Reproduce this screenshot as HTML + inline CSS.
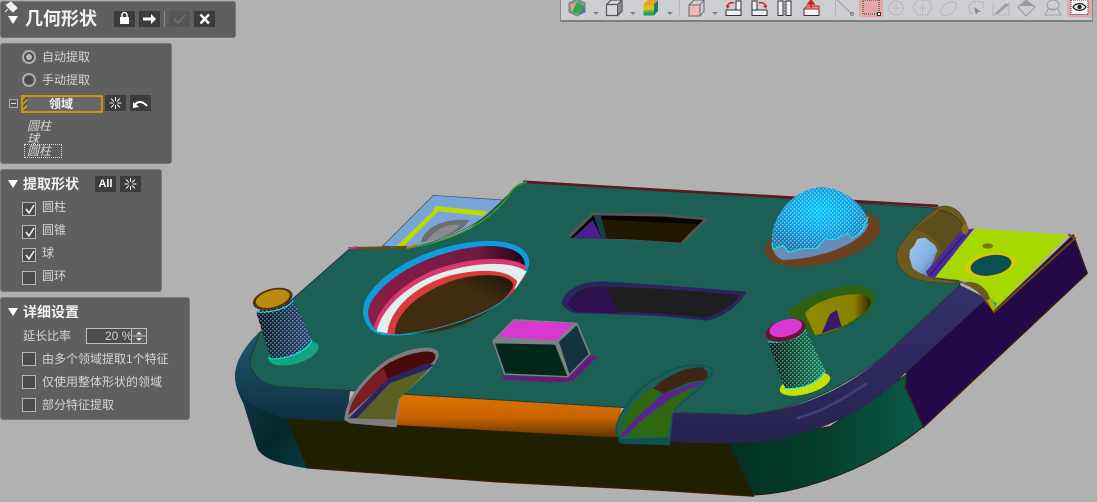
<!DOCTYPE html>
<html><head><meta charset="utf-8"><style>
html,body{margin:0;padding:0;background:#b1b1b1}
#r{position:relative;width:1097px;height:502px;overflow:hidden;background:#b1b1b1;font-family:"Liberation Sans","Noto Sans CJK SC",sans-serif;color:#d4d4d4;font-size:12px}
#r *{box-sizing:border-box}
.p{position:absolute;left:0;background:#5f5f5f;border:1px solid #777;border-radius:3px}
.t{position:absolute;white-space:nowrap;line-height:14px}
.b{font-weight:bold;color:#f2f2f2}
.btn{position:absolute;width:21px;height:16px;background:#3c3c3c;color:#fff;text-align:center;font-size:11px;line-height:16px;font-weight:bold}
.cb{position:absolute;left:22px;width:14px;height:14px;border:1px solid #b5b5b5;background:#4b4b4b}
.cb svg{position:absolute;left:1px;top:1px}
.tri{position:absolute;width:0;height:0;border-left:5px solid transparent;border-right:5px solid transparent;border-top:8px solid #fff}
.rd{position:absolute;left:22px;width:14px;height:14px;border:2px solid #b0b0b0;border-radius:50%;background:#4b4b4b}
svg{position:absolute;left:0;top:0;overflow:visible}
</style></head><body><div id="r">

<svg width="1097" height="502" viewBox="0 0 1097 502">
<defs>
<pattern id="d" width="12" height="12" patternUnits="userSpaceOnUse"><rect x="1" y="1" width="3" height="3" fill="#e8f8ff"/><rect x="7" y="7" width="3" height="3" fill="#e8f8ff"/></pattern>
<linearGradient id="og" x1="0" y1="0" x2="0" y2="1"><stop offset="0" stop-color="#e07200"/><stop offset=".55" stop-color="#c86400"/><stop offset="1" stop-color="#5f3300"/></linearGradient>
<linearGradient id="rim" x1="0" y1="0" x2="0" y2="1"><stop offset="0" stop-color="#1f5a70"/><stop offset="1" stop-color="#0e2f40"/></linearGradient>
<linearGradient id="corner" x1="0" y1="0" x2="1" y2="1"><stop offset="0" stop-color="#123c4a"/><stop offset=".6" stop-color="#04262c"/><stop offset="1" stop-color="#063a40"/></linearGradient>
<linearGradient id="wine" x1="0" y1="0" x2="1" y2="0"><stop offset="0" stop-color="#8a1d48"/><stop offset=".7" stop-color="#701a40"/><stop offset="1" stop-color="#200515"/></linearGradient>
<linearGradient id="brn" x1="0" y1="1" x2="1" y2="0"><stop offset="0" stop-color="#402e10"/><stop offset=".7" stop-color="#402c10"/><stop offset="1" stop-color="#1c1408"/></linearGradient>
<linearGradient id="cylL" x1="0" y1="0" x2="1" y2="0"><stop offset="0" stop-color="#04121e"/><stop offset="1" stop-color="#2a4c7a"/></linearGradient>
<linearGradient id="cylR" x1="0" y1="0" x2="1" y2="0"><stop offset="0" stop-color="#021a12"/><stop offset="1" stop-color="#148a5c"/></linearGradient>
<radialGradient id="sph" cx=".5" cy=".38" r=".6"><stop offset="0" stop-color="#00c8ff"/><stop offset=".6" stop-color="#0ea0e0"/><stop offset="1" stop-color="#1a7cb0"/></radialGradient>
<linearGradient id="gr" x1="0" y1="0" x2="1" y2="0"><stop offset="0" stop-color="#01301f"/><stop offset=".5" stop-color="#053f2c"/><stop offset="1" stop-color="#0a5a48"/></linearGradient>
<linearGradient id="yh" x1="0" y1="0" x2="1" y2="0"><stop offset="0" stop-color="#908a00"/><stop offset=".75" stop-color="#8a8000"/><stop offset="1" stop-color="#2c2800"/></linearGradient>
<linearGradient id="rimB" x1="0" y1="0" x2="0" y2="1"><stop offset="0" stop-color="#35316a"/><stop offset="1" stop-color="#26224f"/></linearGradient>
<linearGradient id="bl" x1="0" y1="0" x2="1" y2="1"><stop offset="0" stop-color="#a8ccf4"/><stop offset=".6" stop-color="#82aede"/><stop offset="1" stop-color="#3c6a90"/></linearGradient>
</defs>
<g transform="translate(230 170) scale(.33333)">
<!-- back plate -->
<path d="M458,228 L610,76 L822,90 C780,140 680,205 530,235Z" fill="#79a4d8" stroke="#3e4a50" stroke-width="2"/>
<path d="M500,228 L608,125 L618,108 L772,124 L762,138 L625,124 L522,228Z" fill="#bcd900"/>
<path d="M572,218 C585,170 640,145 718,150 C700,185 640,205 572,218Z" fill="#6e6e6e"/>
<path d="M590,215 C610,180 650,160 690,165 C670,190 630,205 590,215Z" fill="#8b8b8b"/>
<!-- lower side: olive -->
<path d="M165,745 L230,893 L800,935 L1290,960 L1570,978 L1560,800 L1495,820 L1320,810 L500,765 L350,755Z" fill="#1f2000" stroke="#3a1a05" stroke-width="5"/>
<!-- corner side -->
<path d="M15,620 C15,650 30,680 40,700 L80,830 C90,860 130,880 232,895 L168,745Z" fill="url(#corner)"/>
<!-- blue rim left -->
<path d="M15,620 C15,570 50,520 100,475 L140,600 L360,662 L350,755 L165,745 C80,720 15,680 15,620Z" fill="url(#rim)"/>
<path d="M88,490 L190,385 L355,238 L375,238 L200,420Z" fill="#143f50"/>
<!-- orange -->
<path d="M510,672 L1175,712 L1160,802 L500,765 C498,720 505,690 510,672Z" fill="url(#og)"/>
<!-- right lower green and purple -->
<path d="M1495,818 L1570,975 C1730,970 1950,880 2080,770 L2025,650 L2050,600 L1800,770Z" fill="url(#gr)" stroke="#2a1a08" stroke-width="3"/>
<path d="M2027,650 L2030,605 L2265,385 L2290,425 L2530,195 L2572,310 L2080,772Z" fill="#220a48" stroke="#3a2408" stroke-width="4"/>
<!-- blue rim right -->
<path d="M1325,728 L1550,735 C1680,720 1820,680 1960,560 L2190,345 L2270,385 L2030,605 C1960,680 1840,760 1700,795 C1600,820 1500,825 1315,815Z" fill="url(#rimB)"/>
<path d="M1700,745 C1780,725 1850,680 1910,640" stroke="#4c4a80" stroke-width="8" fill="none" opacity=".7"/>
<!-- top surface -->
<path d="M60,570 C60,610 90,640 140,650 L360,662 L510,672 L1175,712 L1325,726 L1550,735 C1680,720 1820,670 1960,560 L2190,345 L2130,115 L1290,60 L885,35 C840,60 800,120 720,175 C660,215 600,225 530,235 L355,240 L190,385 L88,490Z" fill="#1c5f55" stroke="#1d3b3a" stroke-width="3"/>
<!-- top edges -->
<path d="M880,35 L1290,60 L2125,108" fill="none" stroke="#5a1a20" stroke-width="8"/>
<path d="M530,234 C650,220 760,170 830,85 C845,60 860,42 890,36" fill="none" stroke="#2b9a32" stroke-width="5"/>
<path d="M355,236 L530,232" stroke="#5a5020" stroke-width="9"/>
<path d="M355,236 L382,230" stroke="#d030c0" stroke-width="5"/>
<path d="M530,234 L562,224" stroke="#d07010" stroke-width="6"/>
<!-- big hole -->
<path d="M440,490 C400,470 385,420 415,375 C470,290 620,220 760,213 C850,208 905,240 897,285 C885,330 850,370 810,400 C740,450 600,497 490,497 C470,497 450,495 440,490Z" fill="#0f9bdc"/>
<path d="M447,484 C410,460 405,420 430,385 C485,305 630,235 770,228 C840,226 890,250 884,290 C875,325 850,365 805,397 C735,445 600,490 495,492Z" fill="url(#wine)"/>
<path d="M432,470 C450,400 540,315 660,285 C730,265 840,255 888,288 L884,320 L850,365 C760,440 600,490 490,493 L445,484Z" fill="#d83a70"/>
<path d="M440,484 C455,410 550,325 670,298 C740,280 840,270 890,305 L860,352 C770,440 600,490 490,493Z" fill="#e2eeec"/>
<path d="M472,490 C480,410 570,335 680,312 C750,298 830,295 862,335 L850,365 C770,440 600,490 490,493Z" fill="#d83a3e"/>
<path d="M495,494 C490,440 560,365 680,328 C750,310 840,308 850,345 C835,395 720,475 600,488Z" fill="url(#brn)"/>
<path d="M490,495 C600,490 740,445 812,398" fill="none" stroke="#0f9bdc" stroke-width="3"/>
<!-- slot 1 -->
<path d="M1008,204 L1085,128 L1290,130 L1436,145 L1360,220 L1230,212Z" fill="#555"/>
<path d="M1020,204 L1090,136 L1300,140 L1420,150 L1350,216 L1230,208Z" fill="#050505"/>
<path d="M1110,148 L1300,158 L1405,162 L1352,218 L1230,210 L1125,204Z" fill="#221700"/>
<path d="M1030,204 L1088,150 L1115,205Z" fill="#4b1f8c"/>
<path d="M1090,135 L1112,135 L1130,205 L1115,205Z" fill="#173e4c"/>
<!-- slot 2 -->
<path d="M995,397 C1010,350 1070,330 1130,335 L1290,345 L1550,365 C1530,400 1490,440 1430,452 L1290,438 L1130,432 L1040,430 C1015,425 998,412 995,397Z" fill="#2a2560"/>
<path d="M1012,402 C1030,360 1080,345 1130,350 L1290,356 L1530,375 C1510,405 1470,435 1420,442 L1290,430 L1150,425 L1040,425Z" fill="#1e1e1e"/>
<path d="M1012,405 C1030,365 1080,348 1130,352 L1165,430 L1040,425Z" fill="#2c1050"/>
<!-- box -->
<path d="M815,618 L1015,622 L1080,555 L1102,560 L1030,632 L980,638 L825,628Z" fill="#6a1a78"/>
<path d="M787,512 L850,447 L1042,458 L1082,552 L1014,622 L822,614Z" fill="#7b8283"/>
<path d="M805,500 L852,452 L1030,460 L980,512Z" fill="#d838d0"/>
<path d="M795,520 L975,524 L1012,618 L826,610Z" fill="#01271a"/>
<path d="M987,516 L1040,466 L1076,552 L1018,612Z" fill="#12333f"/>
<!-- left notch -->
<path d="M343,750 C345,690 400,620 470,570 C520,540 610,515 626,548 C632,580 560,640 510,680 L500,772 L360,760Z" fill="#7d7d7d"/>
<path d="M356,735 C360,690 410,625 475,580 C520,555 605,530 616,555 C618,575 600,585 580,590 L480,625 Z" fill="#4a0a0a"/>
<path d="M356,735 C360,690 410,630 460,595 L475,628Z" fill="#7a1e22"/>
<path d="M356,745 L475,625 L590,580 L612,585 L590,600 L480,640 L380,745Z" fill="#2a2560"/>
<path d="M380,746 L480,640 L592,600 C570,630 530,660 505,690 L495,748Z" fill="#5a6022"/>
<!-- cylinder left -->
<ellipse cx="190" cy="548" rx="78" ry="34" transform="rotate(-15 190 548)" fill="#12a582"/>
<path d="M78,425 L190,390 L245,510 C230,545 170,570 122,565Z" fill="url(#cylL)"/>
<path d="M78,425 L190,390 L245,510 C230,545 170,570 122,565Z" fill="url(#d)"/>
<path d="M78,425 C110,430 170,420 190,392 M118,566 C170,570 230,545 246,510" fill="none" stroke="#10f0f0" stroke-width="3"/>
<ellipse cx="128" cy="387" rx="61" ry="31" transform="rotate(-15 128 387)" fill="#55300f"/>
<ellipse cx="128" cy="386" rx="52" ry="25" transform="rotate(-15 128 386)" fill="#bd8a10"/>
<!-- right part in own coords -->
<g transform="translate(1230 0)">
<!-- right notch -->
<path d="M-72,785 C-75,740 -10,650 60,618 C120,578 205,578 217,600 C215,640 120,690 98,730 L88,824 L-55,818Z" fill="#1c5f55" stroke="#0f5050" stroke-width="4"/>
<path d="M-62,795 C-50,730 -10,680 40,652 L60,645 L50,690 L-10,745Z" fill="#2e6612"/>
<path d="M40,655 C70,622 140,590 185,592 C205,598 208,620 195,630 L150,636 L70,670Z" fill="#3e2612"/>
<path d="M-62,800 L-10,742 L70,670 L192,630 L180,645 L100,680 L0,755 L-45,800Z" fill="#5a2590"/>
<path d="M-45,800 L0,755 L100,680 L165,648 C140,680 108,705 95,735 L85,802Z" fill="#2e6612"/>
<path d="M-70,808 L85,802 L88,824 L-55,822Z" fill="#0f5050"/>
<!-- lug -->
<path d="M900,110 C945,100 975,135 987,190 L880,325 L970,336 C930,345 830,338 800,312 C775,292 765,268 772,245 C790,200 850,140 900,110Z" fill="#6a5a20" stroke="#4a4016" stroke-width="2"/>
<path d="M900,120 C935,125 965,150 972,180 L905,262 C905,225 875,190 822,178Z" fill="#5c4e1a"/>
<path d="M897,120 C935,125 965,150 973,175" fill="none" stroke="#3e3410" stroke-width="2"/>
<path d="M810,240 L822,228 L832,207 L855,203 L885,225 L892,242 L862,318 L838,308 L818,295 L808,262Z" fill="url(#bl)"/>
<path d="M858,305 L965,182 L1003,175 L885,322 L865,320Z" fill="#4a2a9a"/>
<path d="M872,312 L975,192" stroke="#2e1670" stroke-width="4"/>
<ellipse cx="975" cy="178" rx="10" ry="16" fill="#8a7010"/>
<!-- plate -->
<path d="M1005,175 L1285,195 L1060,422 C1050,370 1020,335 970,332 L885,322Z" fill="#a6d800"/>
<path d="M1285,193 L1305,205 L1060,428" fill="none" stroke="#6a4a18" stroke-width="6"/>
<ellipse cx="1050" cy="285" rx="78" ry="36" transform="rotate(-10 1050 285)" fill="#d8c800"/>
<ellipse cx="1053" cy="286" rx="62" ry="30" transform="rotate(-10 1053 286)" fill="#0b4f4f"/>
<ellipse cx="1043" cy="228" rx="16" ry="8" fill="#7a7a10"/>
<!-- tail -->
<path d="M965,340 C1000,325 1040,350 1050,385 L1060,425 L1035,395 C1020,365 995,350 965,340Z" fill="#6a5a20"/>
<path d="M1040,390 L1060,425 L1072,402 L1055,385Z" fill="#b8a810"/><path d="M1058,395 L1065,412 L1072,400Z" fill="#12a8c8"/>
<!-- sphere -->
<ellipse cx="548" cy="205" rx="178" ry="76" transform="rotate(-14 548 205)" fill="#6a4020"/>
<path d="M395,225 C390,130 470,55 540,52 C610,50 680,110 685,160 C680,210 560,265 430,270 C410,265 397,245 395,225Z" fill="#6a8ab8"/>
<path d="M395,225 C390,130 470,55 540,52 C610,50 680,110 685,160 L665,185 L635,205 L625,190 L580,210 L555,205 L530,235 L490,235 L450,245 L430,225 L400,235Z" fill="url(#sph)"/>
<path d="M395,225 C390,130 470,55 540,52 C610,50 680,110 685,160 L665,185 L635,205 L625,190 L580,210 L555,205 L530,235 L490,235 L450,245 L430,225 L400,235Z" fill="url(#d)"/>
<path d="M395,220 L400,238 L430,225 L445,247 L490,235 L530,235 L555,205 L580,210 L625,190 L635,205 L665,185 L685,140" fill="none" stroke="#10e8f0" stroke-width="3"/>
<!-- hole right -->
<path d="M445,430 C470,385 590,345 660,347 C705,350 715,390 690,420 C650,460 570,495 520,497Z" fill="#2e6010"/>
<path d="M495,430 C520,395 600,370 660,372 C690,375 700,395 685,415 C650,450 590,485 525,495 Z" fill="url(#yh)"/>
<path d="M570,432 L590,420 L605,470 L545,490Z" fill="#3e1868"/>
<!-- cylinder right -->
<ellipse cx="495" cy="642" rx="78" ry="30" transform="rotate(-15 495 642)" fill="#c8e000"/>
<path d="M385,515 L495,475 L555,600 C540,640 480,660 435,655Z" fill="url(#cylR)"/>
<path d="M385,515 L495,475 L555,600 C540,640 480,660 435,655Z" fill="url(#d)"/>
<path d="M385,515 C420,520 480,510 497,477 M433,655 C480,660 540,640 556,600" fill="none" stroke="#10f0f0" stroke-width="3"/>
<ellipse cx="437" cy="481" rx="62" ry="32" transform="rotate(-15 437 481)" fill="#6a1530"/>
<ellipse cx="437" cy="474" rx="50" ry="25" transform="rotate(-15 437 474)" fill="#d838d0"/>
</g>
</g>
</svg>

<!-- header -->
<div class="p" style="top:1px;width:236px;height:37px"></div>
<svg width="30" height="30"><path d="M6,5 L11,2 L17,8 L13,12Z M8,9 L5,12" fill="#f0f0f0" stroke="#f0f0f0"/></svg>
<div class="tri" style="left:8px;top:16px"></div>
<div class="t b" style="left:25px;top:8px;font-size:18px;line-height:22px">几何形状</div>
<div class="btn" style="left:114px;top:11px"></div>
<svg width="140" height="30"><rect x="120" y="17" width="9" height="7" fill="#fff"/><path d="M122,17 V15 a2.500,2.500 0 0 1 5,0 V17" fill="none" stroke="#fff" stroke-width="1.500"/></svg>
<div class="btn" style="left:139px;top:11px"></div>
<svg width="165" height="30"><path d="M143,17.500 H151 V14 L156,19 L151,24 V20.500 H143Z" fill="#fff"/></svg>
<div style="position:absolute;left:164px;top:11px;width:1px;height:16px;background:#8a8a8a"></div>
<div class="btn" style="left:169px;top:11px;background:#555"></div>
<svg width="195" height="30"><path d="M174,19 L178,23 L185,15" fill="none" stroke="#6e6e6e" stroke-width="2"/></svg>
<div class="btn" style="left:194px;top:11px"></div>
<svg width="220" height="30"><path d="M200.500,14.500 L209,23.500 M209,14.500 L200.500,23.500" stroke="#fff" stroke-width="2.400"/></svg>

<!-- panel 2 -->
<div class="p" style="top:43px;width:172px;height:121px"></div>
<div class="rd" style="top:50px"><div style="position:absolute;left:2px;top:2px;width:6px;height:6px;border-radius:50%;background:#b8b8b8"></div></div>
<div class="t" style="left:42px;top:50px">自动提取</div>
<div class="rd" style="top:73px"></div>
<div class="t" style="left:42px;top:73px">手动提取</div>
<div style="position:absolute;left:9px;top:99px;width:9px;height:9px;border:1px solid #aaa;background:#555"><div style="position:absolute;left:1px;top:3px;width:5px;height:1px;background:#ddd"></div></div>
<div style="position:absolute;left:21px;top:95px;width:82px;height:18px;border:2px solid #c8980c;background:#686868"></div>
<div style="position:absolute;left:23px;top:97px;width:4px;height:14px;background:repeating-linear-gradient(135deg,#c8980c 0 2px,#555 2px 4px)"></div>
<div class="t b" style="left:49px;top:97px">领域</div>
<div class="btn" style="left:105px;top:95px"></div>
<svg width="130" height="115"><path d="M115.500,97 V101 M115.500,105 V109 M109.500,103 H113.500 M117.500,103 H121.500 M111,98.500 L114,101.500 M120,98.500 L117,101.500 M111,107.500 L114,104.500 M120,107.500 L117,104.500" stroke="#eee" fill="none"/></svg>
<div class="btn" style="left:130px;top:95px"></div>
<svg width="155" height="115"><path d="M134,107 C136,101 142,100 147,106" fill="none" stroke="#fff" stroke-width="2"/><path d="M133,102 L133,108 L139,107Z" fill="#fff"/></svg>
<div class="t" style="left:27px;top:119px;font-style:italic">圆柱</div>
<div class="t" style="left:27px;top:132px;font-style:italic">球</div>
<div style="position:absolute;left:24px;top:144px;width:38px;height:14px;border:1px dotted #ddd"></div>
<div class="t" style="left:27px;top:144px;font-style:italic">圆柱</div>

<!-- panel 3 -->
<div class="p" style="top:169px;width:162px;height:123px"></div>
<div class="tri" style="left:8px;top:180px"></div>
<div class="t b" style="left:23px;top:177px;font-size:14px">提取形状</div>
<div class="btn" style="left:95px;top:176px">All</div>
<div class="btn" style="left:120px;top:176px"></div>
<svg width="145" height="195"><path d="M130.500,178 V182 M130.500,186 V190 M124.500,184 H128.500 M132.500,184 H136.500 M126,179.500 L129,182.500 M135,179.500 L132,182.500 M126,188.500 L129,185.500 M135,188.500 L132,185.500" stroke="#eee" fill="none"/></svg>
<div class="cb" style="top:202px"><svg width="11" height="11"><path d="M2,5 L5,9 L10,1" fill="none" stroke="#eee" stroke-width="1.600"/></svg></div>
<div class="t" style="left:42px;top:200px">圆柱</div>
<div class="cb" style="top:225px"><svg width="11" height="11"><path d="M2,5 L5,9 L10,1" fill="none" stroke="#eee" stroke-width="1.600"/></svg></div>
<div class="t" style="left:42px;top:223px">圆锥</div>
<div class="cb" style="top:248px"><svg width="11" height="11"><path d="M2,5 L5,9 L10,1" fill="none" stroke="#eee" stroke-width="1.600"/></svg></div>
<div class="t" style="left:42px;top:246px">球</div>
<div class="cb" style="top:271px"></div>
<div class="t" style="left:42px;top:269px">圆环</div>

<!-- panel 4 -->
<div class="p" style="top:297px;width:190px;height:123px"></div>
<div class="tri" style="left:8px;top:308px"></div>
<div class="t b" style="left:23px;top:305px;font-size:14px">详细设置</div>
<div class="t" style="left:23px;top:329px">延长比率</div>
<div style="position:absolute;left:86px;top:328px;width:61px;height:16px;border:1px solid #c0c0c0;background:#4b4b4b"></div>
<div class="t" style="left:105px;top:329px">20 %</div>
<div style="position:absolute;left:131px;top:328px;width:16px;height:16px;border:1px solid #c0c0c0;background:#606060"></div>
<svg width="150" height="346"><path d="M136,334.500 L139,331.500 L142,334.500Z M136,338 L139,341 L142,338Z" fill="#ddd"/><path d="M132,336 H146" stroke="#bbb"/></svg>
<div class="cb" style="top:352px"></div><div class="t" style="left:42px;top:352px">由多个领域提取1个特征</div>
<div class="cb" style="top:375px"></div><div class="t" style="left:42px;top:375px">仅使用整体形状的领域</div>
<div class="cb" style="top:398px"></div><div class="t" style="left:42px;top:398px">部分特征提取</div>

<!-- toolbar -->
<div style="position:absolute;left:560px;top:0;width:533px;height:22px;background:#ccced2;border-left:1px solid #8a8a8a;border-right:1px solid #8a8a8a;border-bottom:2px solid #7c7c7c"></div>
<svg width="1097" height="24" viewBox="0 0 1097 24">
<path d="M577,-1 L585,3 L585,12 L577,16 L569,12 L569,3Z" fill="#8a9a90" stroke="#777"/>
<path d="M577,2 L584,6 L580,14 L572,12Z" fill="#2fa854"/><path d="M577,2 L570,5 L572,12Z" fill="#d8a0a0"/><path d="M580,14 L584,6 L585,12Z" fill="#4a70c8"/>
<g fill="#808080"><path d="M593,12 h6 l-3,3z M630,12 h6 l-3,3z M667,12 h6 l-3,3z M712,12 h6 l-3,3z"/></g>
<path d="M606.500,4.500 L611,0 H622 V11 L617.500,15.500 H606.500Z" fill="#d6d8dc" stroke="#555" stroke-width="1.200"/>
<path d="M617.500,4.500 L622,0 V11 L617.500,15.500Z" fill="#8a8c90" stroke="#555"/><path d="M606.500,4.500 H617.500" stroke="#555" stroke-width="1.200"/>
<defs><linearGradient id="cc" x1="0" y1="0" x2="0" y2="1"><stop offset="0" stop-color="#e8a020"/><stop offset=".4" stop-color="#d8d020"/><stop offset=".7" stop-color="#40b040"/><stop offset="1" stop-color="#109080"/></linearGradient></defs>
<path d="M643.500,4 H654 V15.500 H643.500Z" fill="url(#cc)"/><path d="M654,4 L658,0 V11 L654,15.500Z" fill="#1e7a70"/><path d="M643.500,4 L648,0 H658 L654,4Z" fill="#e8a020"/>
<path d="M679.500,0 V17" stroke="#b5b7bb"/>
<path d="M689,5 H700 V16 H689Z" fill="#f0b8b8" stroke="#666"/><path d="M689,5 L694,0 H704 V11 L700,16 M700,5 L704,0" fill="none" stroke="#666"/>
<!-- section icons -->
<path d="M726,10 H741 V15.500 H726Z M736,1 H741 V10 H736Z" fill="#f0f0f4" stroke="#333"/><path d="M727,7 C728,3 731,2 734,3" fill="none" stroke="#c02828" stroke-width="1.500"/><path d="M726,5 L727,9 L730,6Z" fill="#c02828"/>
<path d="M752,10 H767 V15.500 H752Z M752,1 H757 V10 H752Z" fill="#f0f0f4" stroke="#333"/><path d="M759,3 C762,2 765,3 766,7" fill="none" stroke="#c02828" stroke-width="1.500"/><path d="M767,5 L766,9 L763,6Z" fill="#c02828"/>
<path d="M778,1 H783 V15.500 H778Z M786,1 H791 V15.500 H786Z" fill="#f0f0f4" stroke="#333"/><path d="M784.500,1 V15" stroke="#888" stroke-dasharray="2 1"/>
<path d="M804,9 H819 V15.500 H804Z" fill="#f4f4f8" stroke="#333"/><path d="M804,9 L807,6 H819 V9Z" fill="#e88" stroke="#c02828"/><path d="M811,8 V3 M808,4 L811,0 L814,4Z" stroke="#c02828" fill="#c02828" stroke-width="1.500"/>
<path d="M835.500,0 V17" stroke="#b5b7bb"/>
<path d="M837,0 L852,14" stroke="#9a9a9a"/><circle cx="852" cy="14" r="1.500" fill="none" stroke="#777"/>
<rect x="859" y="0" width="24" height="17.500" fill="#e4a8a8"/>
<rect x="863" y="0" width="16" height="14" fill="none" stroke="#333" stroke-dasharray="1 1"/><rect x="877.500" y="12.500" width="3" height="3" fill="#fff" stroke="#333"/>
<g fill="none" stroke="#a6a8ac" stroke-dasharray="1.500 1">
<circle cx="896" cy="8" r="7"/><path d="M893,8 h6 M896,5 v6"/>
<path d="M917,0 H928 L932,7 L928,15 H917 L913,7Z"/><path d="M919.500,8 h6 M922.500,5 v6"/>
<path d="M943,15 C938,13 942,5 948,3 C954,0 958,3 956,8 C953,14 948,16 943,15Z"/>
<path d="M973,14 C967,12 967,5 973,2 C979,0 986,2 983,8"/>
<path d="M993,15 H1009 M993,15 V2 M1009,15 V2"/>
</g>
<path d="M974,7 L976,15 L978,12 L981,12Z" fill="#8a8a8a"/>
<path d="M994,14 L1006,3 L1009,5 L998,14Z" fill="#a0a0a0"/>
<path d="M1026,0 L1035,7 L1026,16 L1018,7Z" fill="none" stroke="#a0a0a4" stroke-width="1.200"/><path d="M1026,0 L1035,6 L1018,6Z" fill="#9a9a9a"/>
<ellipse cx="1053" cy="5" rx="6" ry="5" fill="none" stroke="#9a9a9a"/><path d="M1045,15 L1048,9 H1058 L1061,15 Z" fill="none" stroke="#a0a0a4"/>
<rect x="1067" y="0" width="25" height="17.500" fill="#e4a8a8"/>
<rect x="1071" y="0" width="17" height="14.500" fill="#f4f4f4" stroke="#333" stroke-dasharray="1 1"/>
<path d="M1073,7 C1076,2.500 1083,2.500 1086,7 C1083,11.500 1076,11.500 1073,7Z" fill="none" stroke="#222" stroke-width="1.200"/><circle cx="1079.500" cy="7" r="2.200" fill="#222"/>
</svg>
</div></body></html>
